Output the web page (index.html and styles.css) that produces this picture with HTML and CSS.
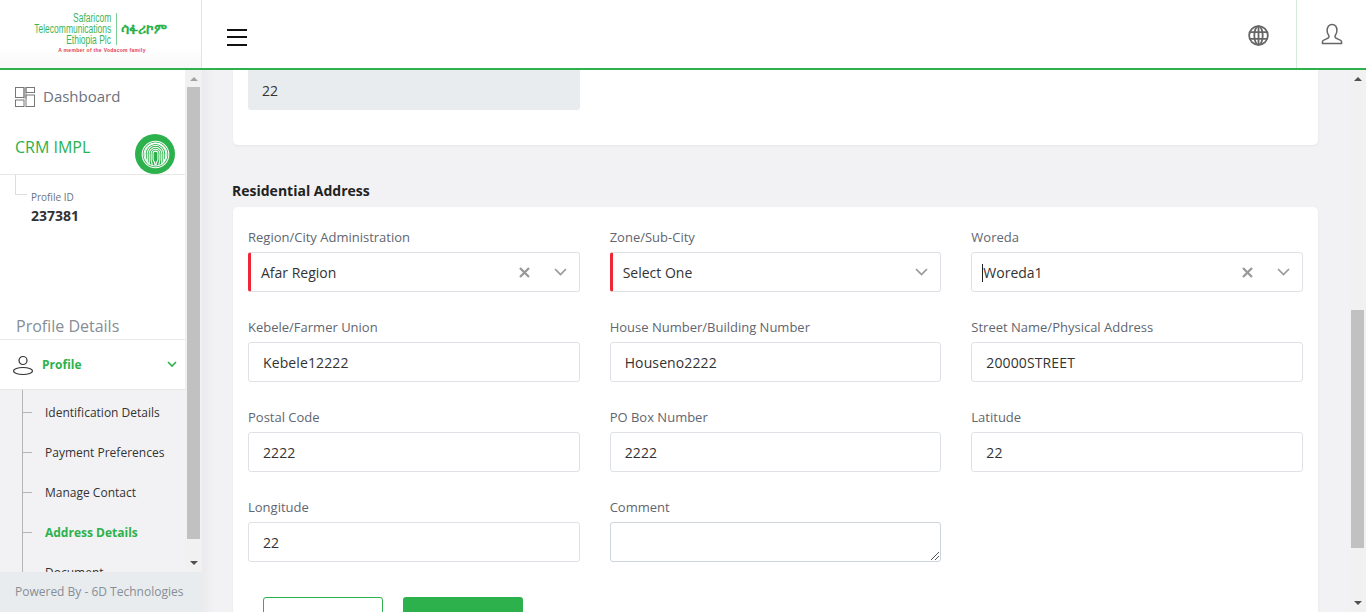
FILE: index.html
```html
<!DOCTYPE html>
<html lang="en">
<head>
<meta charset="utf-8">
<title>Address Details</title>
<link rel="stylesheet" href="styles.css">
</head>
<body>
<div class="app">
  <header class="topbar">
    <div class="brand">
      <div class="logo">
        <div class="logo-row">
          <div class="logo-en"><span>Safaricom</span><span>Telecommunications</span><span>Ethiopia Plc</span></div>
          <div class="logo-am">ሳፋሪኮም</div>
        </div>
        <div class="logo-tag">A member of the Vodacom family</div>
      </div>
    </div>
    <button class="burger" aria-label="Menu"><i></i><i></i><i></i></button>
    <div class="top-right">
      <div class="globe">
        <svg width="21" height="21" viewBox="0 0 22 22" fill="none" stroke="#666" stroke-width="1.9"><circle cx="11" cy="11" r="9.8"/><ellipse cx="11" cy="11" rx="4.4" ry="9.8"/><path d="M2 7.500h18M2 14.500h18M11 1.200v19.600"/></svg>
      </div>
      <div class="user">
        <svg width="22" height="22" viewBox="0 0 22 22" fill="none" stroke="#666" stroke-width="1.5"><path d="M1.500 20.500h19v-2.200c0-1.400-5.600-2.600-6.200-3.600-.4-.7-.4-1.700.1-2.400 1-1.400 1.500-3 1.500-4.800C15.900 4 14 1.500 11 1.500S6.100 4 6.100 7.500c0 1.800.5 3.400 1.500 4.800.5.700.5 1.700.1 2.400-.6 1-6.200 2.200-6.200 3.600z"/></svg>
      </div>
    </div>
  </header>
  <div class="workspace">
    <aside class="sidebar">
      <div class="side-scroll">
        <div class="side-inner">
          <div class="dash">
            <svg width="20" height="20" viewBox="0 0 20 20" fill="none" stroke="#777" stroke-width="1"><rect x="8" y=".5" width="4" height="11" fill="#c8c8c8" stroke="none"/><rect x=".5" y=".5" width="8.500" height="10"/><rect x="11" y=".5" width="8.500" height="5"/><rect x="11" y="8" width="8.500" height="11.500"/><rect x=".5" y="13" width="8.500" height="6.500"/></svg>
            <span class="dash-label">Dashboard</span>
          </div>
          <div class="crm">
            <span class="crm-name">CRM IMPL</span>
            <span class="finger">
              <svg width="29" height="29" viewBox="0 0 30 30" fill="none" stroke="#fff" stroke-width="1.100"><circle cx="15" cy="15" r="13.800"/><circle cx="15" cy="15" r="11.800"/><path d="M4.500 14a10.500 10.500 0 0 1 21 0M6.500 14a8.500 8.500 0 0 1 17 0M8.500 14a6.500 6.500 0 0 1 13 0M10.500 14a4.500 4.500 0 0 1 9 0M12.500 14a2.500 2.500 0 0 1 5 0"/><path d="M4.500 14v5c1 2 2 3 2 3M6.500 14v9c1 1 1 2 2 2M8.500 14v11M10.500 14v6c0 3 1 3 1 6M12.500 14v6c0 2 2 2 2 6M17.500 14v6c0 2-2 2-2 6M19.500 14v6c0 3-1 3-1 6M21.500 14v11M23.500 14v9c-1 1-1 2-2 2M25.500 14v5c-1 2-2 3-2 3"/></svg>
            </span>
          </div>
          <div class="profile-id">
            <div class="pid-label">Profile ID</div>
            <div class="pid-value">237381</div>
          </div>
          <div class="pd-title">Profile Details</div>
          <div class="pd-head">
            <svg width="22" height="22" viewBox="0 0 22 22" fill="none" stroke="#333" stroke-width="1.200"><circle cx="11" cy="6.500" r="4"/><ellipse cx="11" cy="17" rx="9.500" ry="3.500"/></svg>
            <span class="pd-name">Profile</span>
            <svg class="pd-chev" width="10" height="7" viewBox="0 0 10 7" fill="none" stroke="#2db14c" stroke-width="1.600"><path d="M1 1l4 4 4-4"/></svg>
          </div>
          <ul class="sub">
            <li>Identification Details</li>
            <li>Payment Preferences</li>
            <li>Manage Contact</li>
            <li class="on">Address Details</li>
            <li>Document</li>
          </ul>
        </div>
        <div class="bar side-bar">
          <span class="arrow up faint"></span>
          <div class="track"><div class="thumb side-thumb"></div></div>
          <span class="arrow down"></span>
        </div>
      </div>
      <div class="powered">Powered By - 6D Technologies</div>
    </aside>
    <main class="main">
      <div class="content">
        <section class="card card-top">
          <div class="readonly">22</div>
        </section>
        <h2 class="section-title">Residential Address</h2>
        <section class="card card-form">
          <div class="grid">
            <div class="field"><label>Region/City Administration</label>
              <div class="select req"><span class="val">Afar Region</span><svg class="x" width="11" height="11" viewBox="0 0 11 11" stroke="#999" stroke-width="2.300"><path d="M1 1l9 9M10 1l-9 9"/></svg><svg class="chev" width="13" height="8" viewBox="0 0 13 8" fill="none" stroke="#999" stroke-width="1.700"><path d="M1 1l5.500 5.500L12 1"/></svg></div></div>
            <div class="field"><label>Zone/Sub-City</label>
              <div class="select req"><span class="val">Select One</span><svg class="chev" width="13" height="8" viewBox="0 0 13 8" fill="none" stroke="#999" stroke-width="1.700"><path d="M1 1l5.500 5.500L12 1"/></svg></div></div>
            <div class="field"><label>Woreda</label>
              <div class="select"><span class="val caret">Woreda1</span><svg class="x" width="11" height="11" viewBox="0 0 11 11" stroke="#999" stroke-width="2.300"><path d="M1 1l9 9M10 1l-9 9"/></svg><svg class="chev" width="13" height="8" viewBox="0 0 13 8" fill="none" stroke="#999" stroke-width="1.700"><path d="M1 1l5.500 5.500L12 1"/></svg></div></div>
            <div class="field"><label>Kebele/Farmer Union</label><div class="input">Kebele12222</div></div>
            <div class="field"><label>House Number/Building Number</label><div class="input">Houseno2222</div></div>
            <div class="field"><label>Street Name/Physical Address</label><div class="input">20000STREET</div></div>
            <div class="field"><label>Postal Code</label><div class="input">2222</div></div>
            <div class="field"><label>PO Box Number</label><div class="input">2222</div></div>
            <div class="field"><label>Latitude</label><div class="input">22</div></div>
            <div class="field"><label>Longitude</label><div class="input">22</div></div>
            <div class="field"><label>Comment</label><div class="input area"><svg class="grip" width="9" height="9" viewBox="0 0 9 9" stroke="#555" stroke-width="1"><path d="M1 9l8-8M5 9l4-4"/></svg></div></div>
          </div>
          <div class="actions">
            <div class="btn btn-outline"></div>
            <div class="btn btn-solid"></div>
          </div>
        </section>
      </div>
      <div class="bar main-bar">
        <span class="arrow up"></span>
        <div class="track"><div class="thumb main-thumb"></div></div>
        <span class="arrow down"></span>
      </div>
    </main>
  </div>
</div>
</body>
</html>
```
FILE: styles.css
```css
* { box-sizing: border-box; }
html, body { margin: 0; height: 100%; overflow: hidden; }
body { font-family: "Open Sans", sans-serif; color: #333; background: #f2f2f4; }
.app { width: 1366px; height: 612px; display: flex; flex-direction: column; overflow: hidden; }

.topbar { height: 70px; flex: none; display: flex; align-items: stretch; background: #fff; border-bottom: 2px solid #2db14c; }
.brand { width: 202px; flex: none; border-right: 1px solid #d5ecd9; background: linear-gradient(#fff 70%, #f7f7f7); display: flex; justify-content: center; padding-top: 13px; }
.logo { width: 134px; display: flex; flex-direction: column; align-items: center; }
.logo-row { display: flex; align-items: center; width: 134px; }
.logo-en { font-family: "Liberation Sans", sans-serif; font-size: 12.500px; line-height: 11px; color: #3db55c; display: flex; flex-direction: column; align-items: flex-end; padding-right: 4px; border-right: 1px solid #7fce93; height: 32px; width: 83px; flex: none; white-space: nowrap; }
.logo-en span { display: block; transform: scaleX(.68); transform-origin: right center; }
.logo-am { font-family: "DejaVu Sans", sans-serif; font-weight: 700; font-size: 14.400px; color: #2db14c; padding-left: 4px; white-space: nowrap; }
.logo-tag { font-family: "Liberation Sans", sans-serif; font-weight: 700; font-size: 5px; line-height: 8px; letter-spacing: .3px; color: #e6404e; margin: 1px 0 0 3px; white-space: nowrap; }
.burger { margin: 0; width: 70px; padding: 6px 0 0 25px; border: 0; background: none; display: flex; flex-direction: column; gap: 5.500px; justify-content: center; align-items: flex-start; }
.burger i { display: block; width: 20px; height: 2px; background: #111; }
.top-right { margin-left: auto; display: flex; align-items: stretch; }
.globe { width: 78px; display: flex; align-items: center; justify-content: center; padding: 2px 0 0 1px; border-right: 1px solid #d5ecd9; }
.user { width: 69px; display: flex; align-items: center; justify-content: center; }

.workspace { flex: 1; min-height: 0; display: flex; }
.sidebar { width: 202px; flex: none; display: flex; flex-direction: column; background: #f2f2f4; }
.side-scroll { height: 502px; flex: none; display: flex; overflow: hidden; }
.side-inner { width: 185px; flex: none; background: #fff; overflow: hidden; }
.dash { height: 53px; display: flex; align-items: center; padding-left: 15px; gap: 8px; font-size: 15px; color: #6b7280; }
.dash-label { margin-top: -2px; }
.crm { height: 52px; display: flex; justify-content: space-between; padding: 12px 10px 0 15px; border-bottom: 1px solid #e8e8e8; }
.crm-name { font-size: 16px; line-height: 24px; color: #2db14c; }
.finger { width: 40px; height: 40px; margin-top: -1px; border-radius: 50%; background: #2db14c; display: flex; align-items: center; justify-content: center; }
.profile-id { position: relative; height: 139px; padding: 14px 0 0 31px; }
.profile-id::before { content: ""; position: absolute; left: 15px; top: 0; width: 11px; height: 19px; border-left: 1px solid #ddd; border-bottom: 1px solid #ddd; }
.pid-label { font-size: 10px; line-height: 17px; color: #6b7280; }
.pid-value { font-size: 14px; line-height: 20px; font-weight: 700; color: #333; }
.pd-title { height: 25px; padding-left: 16px; font-size: 16px; line-height: 24px; color: #868e96; }
.pd-head { height: 51px; display: flex; align-items: center; padding: 0 8px 0 12px; gap: 8px; background: #fff; border-top: 1px solid #e8e8e8; border-bottom: 1px solid #e8e8e8; }
.pd-name { font-size: 12px; font-weight: 700; color: #2db14c; }
.pd-chev { margin-left: auto; }
.sub { list-style: none; margin: 0; padding: 3px 0 0 22px; background: #f2f2f4; height: 200px; position: relative; }
.sub::before { content: ""; position: absolute; left: 22px; top: 0; bottom: 0; width: 1px; background: #b4b4b4; }
.sub li { position: relative; height: 40px; padding-left: 23px; font-size: 12px; line-height: 40px; color: #333; white-space: nowrap; }
.sub li::before { content: ""; position: absolute; left: 0; top: 19px; width: 10px; height: 1px; background: #b4b4b4; }
.sub li.on { color: #2db14c; font-weight: 700; }
.powered { flex: 1; background: #e9ecef; padding-left: 15px; font-size: 12px; line-height: 40px; color: #868e96; white-space: nowrap; }

.bar { width: 17px; flex: none; display: flex; flex-direction: column; align-items: center; background: #f1f1f1; }
.side-bar { height: 502px; padding: 7px 0 7px; }
.arrow { width: 0; height: 0; flex: none; border-left: 4px solid transparent; border-right: 4px solid transparent; }
.arrow.up { border-bottom: 4px solid #505050; }
.arrow.up.faint { border-bottom-color: #a3a3a3; }
.arrow.down { border-top: 4px solid #505050; }
.track { flex: 1; align-self: stretch; position: relative; }
.side-bar .track { margin: 6px 2px 22px 2px; }
.thumb { background: #c1c1c1; width: 100%; }
.side-thumb { height: 452px; }
.main-bar { height: 542px; padding: 7px 0 7px; background: #f1f1f1; }
.main-bar .track { margin: 0 2px 0 2px; }
.main-thumb { margin-top: 229px; height: 238px; }

.main { flex: 1; min-width: 0; display: flex; background: linear-gradient(90deg, #ebebed, #f2f2f4 12px); overflow: hidden; }
.content { flex: 1; min-width: 0; padding: 0 31px; overflow: hidden; }
.card { background: #fff; border-radius: 0 0 5px 5px; box-shadow: 0 1px 3px rgba(0,0,0,.05); }
.card-top { height: 75px; padding: 0 15px; }
.readonly { width: 332px; height: 40px; background: #e9ecef; border-radius: 0 0 3px 3px; padding-left: 14px; font-size: 14px; line-height: 42px; color: #333; }
.section-title { margin: 36px 0 7px -1px; font-size: 14px; line-height: 19px; font-weight: 700; color: #222; }
.card-form { border-radius: 5px 5px 0 0; padding: 21px 15px 0; height: 420px; }
.grid { display: grid; grid-template-columns: repeat(3, 1fr); column-gap: 30px; row-gap: 26px; }
.field label { display: block; font-size: 13px; line-height: 18px; height: 24px; color: #5f6670; }
.input, .select { height: 40px; background: #fff; border: 1px solid #dee2e6; border-radius: 3px; font-size: 14px; line-height: 40px; color: #333; }
.input { padding-left: 14px; letter-spacing: .12px; }
.area { position: relative; border-color: #ced4da; }
.grip { position: absolute; right: 1px; bottom: 1px; }
.select { display: flex; align-items: center; padding-left: 12px; }
.select.req { border-left: 3px solid #ee2737; padding-left: 10px; }
.val { flex: 1; white-space: nowrap; margin-top: 1px; }
.caret { border-left: 1px solid #222; line-height: 18px; margin-left: -2px; }
.x { margin-right: 24px; }
.chev { margin-right: 12px; }
.actions { display: flex; gap: 20px; padding: 35px 0 0 15px; }
.btn { width: 120px; height: 40px; border-radius: 3px; }
.btn-outline { border: 1px solid #2db14c; background: #fff; }
.btn-solid { background: #2db14c; }
```
